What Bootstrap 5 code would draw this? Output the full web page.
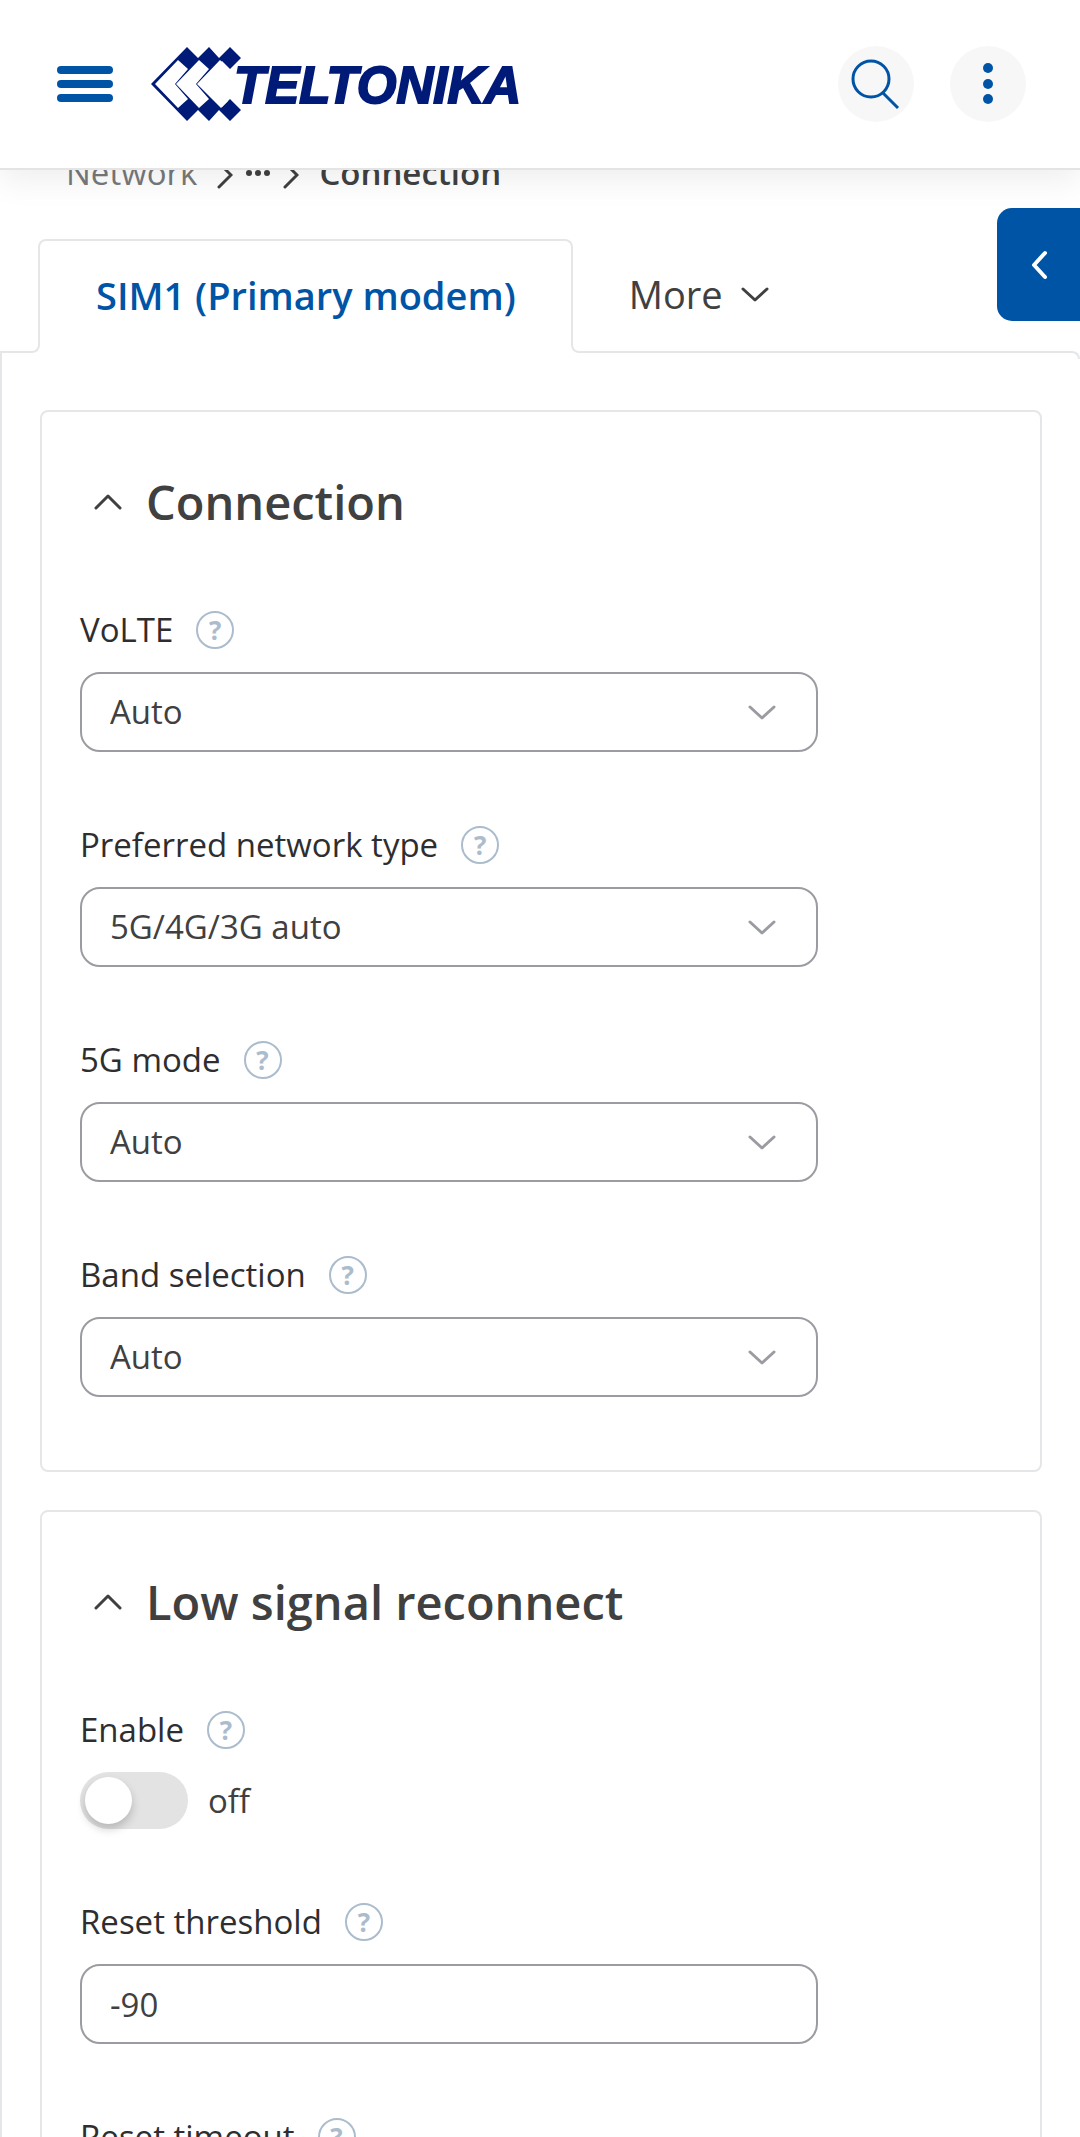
<!DOCTYPE html>
<html lang="en">
<head>
<meta charset="utf-8">
<meta name="viewport" content="width=device-width, initial-scale=1">
<title>Connection - Teltonika</title>
<link href="https://cdn.jsdelivr.net/npm/bootstrap@5.3.0/dist/css/bootstrap.min.css" rel="stylesheet">
<style>
  :root { --brand: #0054a6; --navy: #001a78; --line: #e4e6e8; --ink: #404041; --field: #9b9ca2; }
  body { font-family: "Open Sans", "Noto Sans", sans-serif; font-size: 33px; line-height: 44px; color: var(--ink); background: #fff; }
  .topbar { height: 170px; padding: 0 54px 0 56px; border-bottom: 2px solid #e4e4e4; box-shadow: 0 10px 32px rgba(0,0,0,.07); z-index: 10; }
  .top-actions { gap: 36px; }
  .icon-btn { width: 76px; height: 76px; background: #f7f7f7; }
  .wordmark { margin-left: -8px; padding-top: 4px; font-family: "Liberation Sans", Arial, sans-serif; font-size: 51px; line-height: 56px; font-weight: 700; font-style: italic; color: var(--navy); -webkit-text-stroke: 2px var(--navy); }
  .burger { width: 58px; height: 40px; }
  .scroller { min-height: 0; }
  .crumbs { height: 82px; margin-top: -20px; padding-left: 66px; line-height: 46px; gap: 12px; }
  .crumbs a { color: #77787b; }
  .side-toggle { top: 208px; right: 0; width: 83px; height: 113px; background: var(--brand); border-radius: 15px 0 0 15px; z-index: 5; }
  .tab-row { height: 114px; margin-top: 7px; font-size: 38px; line-height: 50px; }
  .tab-row .seam-left { width: 40px; height: 106px; margin-right: -2px; border: solid var(--line); border-width: 0 2px 2px 0; border-radius: 0 0 8px 0; }
  .tab-row .tab-current { height: 104px; padding: 6px 55px 0 56px; color: var(--brand); border: 2px solid var(--line); border-bottom: 0; border-radius: 8px 8px 0 0; }
  .tab-row .seam-right { height: 106px; margin-left: -2px; padding: 0 0 10px 56px; border: solid var(--line); border-width: 0 0 2px 2px; border-radius: 0 0 0 8px; }
  .tab-row .seam-end { width: 8px; height: 8px; margin-bottom: -6px; border: solid var(--line); border-width: 2px 2px 0 0; border-radius: 0 8px 0 0; }
  .tab-row .btn { font-size: inherit; line-height: inherit; color: var(--ink); gap: 18px; }
  .pane { border-left: 2px solid var(--line); padding: 57px 38px 0; gap: 38px; }
  .panel { border: 2px solid var(--line); border-radius: 8px; padding: 58px 38px 73px; }
  .panel-title { margin: 0 0 74px; padding-left: 14px; gap: 24px; font-size: 47px; line-height: 64px; }
  .panel-title button { width: 28px; height: 28px; }
  .fields { gap: 71px; }
  .field { max-width: 738px; }
  .field-head { gap: 23px; margin-bottom: 20px; color: #2e2e30; }
  .help { width: 38px; height: 38px; border: 2px solid #abbccd; color: #abbccd; font-size: 26px; line-height: 34px; font-weight: 700; }
  .field .form-select, .field .form-control { height: 80px; padding: 0 28px; border: 2px solid var(--field); border-radius: 20px; font-size: 33px; line-height: 44px; color: var(--ink); }
  .field .form-select { background-image: url("data:image/svg+xml,%3Csvg xmlns='http://www.w3.org/2000/svg' viewBox='0 0 28 16'%3E%3Cpath d='M2 3l12 11L26 3' fill='none' stroke='%239b9ca2' stroke-width='3' stroke-linecap='round' stroke-linejoin='round'/%3E%3C/svg%3E"); background-size: 28px 16px; background-position: right 40px center; }
  .toggle { gap: 20px; height: 57px; }
  .toggle .form-check-input { position: relative; width: 108px; height: 57px; margin: 0; border: 0; border-radius: 29px; background: #e3e3e3; }
  .toggle .form-check-input::before { content: ""; position: absolute; left: 5px; top: 5px; width: 47px; height: 47px; border-radius: 50%; background: #fff; box-shadow: 0 5px 10px rgba(0,0,0,.2); }
</style>
<script src="https://cdn.jsdelivr.net/npm/bootstrap@5.3.0/dist/js/bootstrap.bundle.min.js"></script>
</head>
<body class="vh-100 overflow-hidden d-flex flex-column">
<header class="topbar navbar flex-nowrap justify-content-between position-relative bg-white flex-shrink-0">
  <div class="d-flex align-items-center">
    <button class="btn p-0 border-0 d-flex" type="button" aria-label="Menu">
      <svg class="burger" viewBox="0 0 58 40" fill="#0054a6"><rect x="1" y="2" width="56" height="8" rx="4"/><rect x="1" y="16" width="56" height="8" rx="4"/><rect x="1" y="30" width="56" height="8" rx="4"/></svg>
    </button>
    <a class="d-flex align-items-center text-decoration-none ms-4 ps-2" href="#" aria-label="Teltonika">
      <svg class="ms-1" width="92" height="76" viewBox="0 0 92 76" fill="#001a78">
        <path d="M37 1L48 12L59 1L69 12L80 1L91 12L80 23L72 15L49 38L72 61L80 53L91 64L80 75L69 64L59 75L48 64L37 75L1 38Z"/>
        <path fill="#fff" d="M28 14L38 23L25 38L38 53L28 62L5 38ZM49 14L59 23L46 38L59 53L49 62L26 38ZM70 14L78 22L70 54L78 55L71 62L47 38Z"/>
      </svg>
      <span class="wordmark">TELTONIKA</span>
    </a>
  </div>
  <div class="top-actions d-flex">
    <button class="icon-btn btn rounded-circle border-0 p-0" type="button" aria-label="Search">
      <svg width="76" height="76" viewBox="0 0 76 76" fill="none" stroke="#0054a6" stroke-width="3"><circle cx="33" cy="33" r="18"/><path d="M45 47L60 62"/></svg>
    </button>
    <button class="icon-btn btn rounded-circle border-0 p-0" type="button" aria-label="More options">
      <svg width="76" height="76" viewBox="0 0 76 76" fill="#0054a6"><circle cx="38" cy="22" r="5"/><circle cx="38" cy="38" r="5"/><circle cx="38" cy="53" r="5"/></svg>
    </button>
  </div>
</header>

<button class="side-toggle btn border-0 p-0 position-absolute" type="button" aria-label="Open side panel">
  <svg width="18" height="30" viewBox="0 0 18 30" fill="none" stroke="#fff" stroke-width="4" stroke-linecap="round" stroke-linejoin="round"><path d="M15 3L4 15L15 27"/></svg>
</button>

<main class="scroller flex-grow-1">
  <nav class="crumbs d-flex align-items-start" aria-label="Breadcrumb">
    <a class="text-decoration-none me-2" href="#">Network</a>
    <svg width="16" height="48" viewBox="0 0 16 48" fill="none" stroke="#404041" stroke-width="3" stroke-linecap="round"><path d="M2 13L14 25L2 37"/></svg>
    <svg width="26" height="48" viewBox="0 0 26 48" fill="#404041"><circle cx="4" cy="23" r="3"/><circle cx="13" cy="23" r="3"/><circle cx="22" cy="23" r="3"/></svg>
    <svg width="16" height="48" viewBox="0 0 16 48" fill="none" stroke="#404041" stroke-width="3" stroke-linecap="round"><path d="M2 13L14 25L2 37"/></svg>
    <span class="fw-semibold ms-2" aria-current="page">Connection</span>
  </nav>

  <div class="tab-row d-flex">
    <div class="seam-left align-self-end"></div>
    <a class="tab-current d-flex align-items-center fw-semibold text-decoration-none text-nowrap" href="#">SIM1 (Primary modem)</a>
    <div class="seam-right align-self-end flex-grow-1 d-flex align-items-center">
      <button class="btn border-0 p-0 d-flex align-items-center" type="button">More
        <svg width="28" height="16" viewBox="0 0 28 16" fill="none" stroke="#404041" stroke-width="3" stroke-linecap="round" stroke-linejoin="round"><path d="M2 3L14 14L26 3"/></svg>
      </button>
    </div>
    <div class="seam-end align-self-end"></div>
  </div>

  <div class="pane d-flex flex-column">
    <section class="panel">
      <h2 class="panel-title d-flex align-items-center fw-semibold">
        <button class="btn p-0 border-0 d-flex align-items-center" type="button" aria-label="Collapse Connection"><svg width="28" height="16" viewBox="0 0 28 16" fill="none" stroke="#404041" stroke-width="3" stroke-linecap="round" stroke-linejoin="round"><path d="M2 14L14 2L26 14"/></svg></button>
        Connection
      </h2>
      <div class="fields d-flex flex-column">
        <div class="field">
          <div class="field-head d-flex align-items-center"><label for="volte">VoLTE</label><button class="help btn p-0 rounded-circle" type="button">?</button></div>
          <select class="form-select" id="volte"><option>Auto</option></select>
        </div>
        <div class="field">
          <div class="field-head d-flex align-items-center"><label for="nettype">Preferred network type</label><button class="help btn p-0 rounded-circle" type="button">?</button></div>
          <select class="form-select" id="nettype"><option>5G/4G/3G auto</option></select>
        </div>
        <div class="field">
          <div class="field-head d-flex align-items-center"><label for="mode5g">5G mode</label><button class="help btn p-0 rounded-circle" type="button">?</button></div>
          <select class="form-select" id="mode5g"><option>Auto</option></select>
        </div>
        <div class="field">
          <div class="field-head d-flex align-items-center"><label for="band">Band selection</label><button class="help btn p-0 rounded-circle" type="button">?</button></div>
          <select class="form-select" id="band"><option>Auto</option></select>
        </div>
      </div>
    </section>

    <section class="panel">
      <h2 class="panel-title d-flex align-items-center fw-semibold">
        <button class="btn p-0 border-0 d-flex align-items-center" type="button" aria-label="Collapse Low signal reconnect"><svg width="28" height="16" viewBox="0 0 28 16" fill="none" stroke="#404041" stroke-width="3" stroke-linecap="round" stroke-linejoin="round"><path d="M2 14L14 2L26 14"/></svg></button>
        Low signal reconnect
      </h2>
      <div class="fields d-flex flex-column">
        <div class="field">
          <div class="field-head d-flex align-items-center"><label for="enable">Enable</label><button class="help btn p-0 rounded-circle" type="button">?</button></div>
          <div class="toggle d-flex align-items-center"><input class="form-check-input" type="checkbox" role="switch" id="enable"><span>off</span></div>
        </div>
        <div class="field">
          <div class="field-head d-flex align-items-center"><label for="threshold">Reset threshold</label><button class="help btn p-0 rounded-circle" type="button">?</button></div>
          <input class="form-control" type="text" id="threshold" value="-90">
        </div>
        <div class="field">
          <div class="field-head d-flex align-items-center"><label for="timeout">Reset timeout</label><button class="help btn p-0 rounded-circle" type="button">?</button></div>
          <input class="form-control" type="text" id="timeout">
        </div>
      </div>
    </section>
  </div>
</main>
</body>
</html>
